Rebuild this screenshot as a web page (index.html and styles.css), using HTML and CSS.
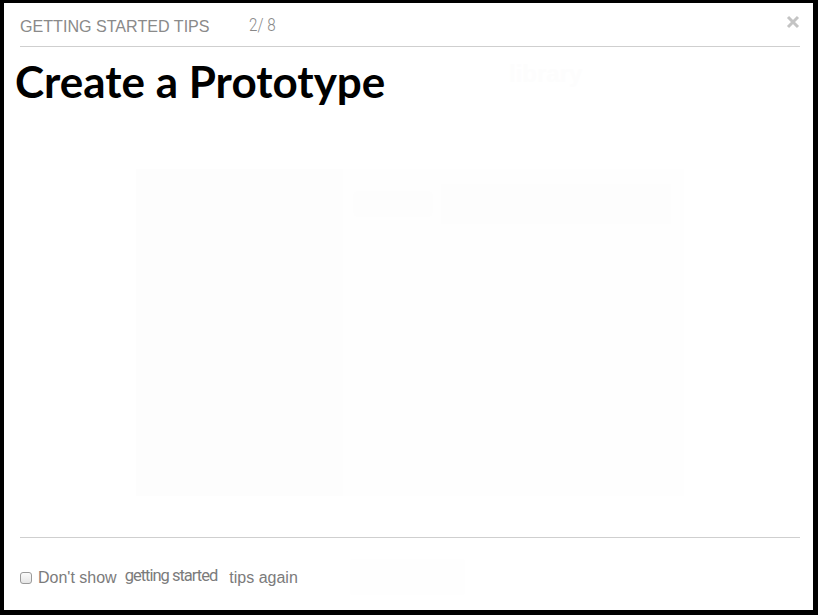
FILE: index.html
```html
<!DOCTYPE html>
<html>
<head>
<meta charset="utf-8">
<link rel="stylesheet" href="styles.css">
</head>
<body>
<div class="panel">
  <div class="header">
    <span class="kicker">GETTING STARTED TIPS</span>
    <span class="count">2/ 8</span>
    <svg class="close" width="14" height="14" viewBox="0 0 14 14"><path d="M2 2 L12 12 M12 2 L2 12" stroke="#c4c4c4" stroke-width="3" stroke-linecap="butt"/></svg>
  </div>
  <h1 class="title">Create a Prototype</h1>
  <div class="ghost-label">library</div>
  <div class="stage">
    <div class="ghost-side"></div>
    <div class="ghost-main">
      <div class="ghost-bar"><span class="ghost-pill"></span><span class="ghost-box"></span></div>
      <div class="ghost-grid"></div>
    </div>
  </div>
  <div class="footer">
    <label class="dontshow"><input type="checkbox" class="check"><span>Don't show</span><span class="raised">getting started</span><span>tips again</span></label>
    <span class="ghost-btn"></span>
  </div>
</div>
</body>
</html>
```
FILE: styles.css
```css
html, body { margin: 0; padding: 0; }
body { background: #000; width: 818px; height: 615px; overflow: hidden; }
.panel {
  margin: 3px 5px 0 4px;
  width: 809px;
  height: 607px;
  background: #fff;
  display: flex;
  flex-direction: column;
  position: relative;
}
.header {
  margin: 0 13px 0 16px;
  height: 44px;
  border-bottom: 1px solid #cfcfcf;
  display: flex;
  align-items: center;
  font-family: "Liberation Sans", Arial, sans-serif;
  box-sizing: border-box;
  position: relative;
}
.kicker { font-size: 16.1px; color: #8a8a8a; margin-top: 3px; }
.count { font-family: Roboto, sans-serif; font-weight: 300; font-size: 19px; color: #888; margin-left: 39px; margin-top: 0; transform: scaleX(0.8); transform-origin: left center; }
.close { position: absolute; right: 0; top: 12px; }
.title {
  margin: 6px 0 0 11px;
  font-family: Lato, sans-serif;
  font-weight: 700;
  font-size: 44px;
  line-height: 56px;
  color: #000;
}
.ghost-label { position: absolute; left: 505px; top: 57px; font-family: "Liberation Sans", sans-serif; font-weight: bold; font-size: 24px; color: #fdfdfd; }
.stage { flex: 1; display: flex; padding: 60px 0 0 132px; }
.ghost-side { width: 207px; height: 327px; background: #fdfdfd; }
.ghost-main { width: 341px; height: 327px; background: #fefefe; padding: 0 0 0 10px; box-sizing: border-box; }
.ghost-bar { display: flex; gap: 8px; margin-top: 15px; height: 40px; align-items: center; }
.ghost-pill { width: 80px; height: 26px; border-radius: 6px; background: #fdfdfd; }
.ghost-box { width: 230px; height: 40px; background: #fdfdfd; }
.ghost-grid { margin-top: 20px; height: 250px; background: #fefefe; }
.footer {
  margin: 0 13px 0 16px;
  height: 73px;
  border-top: 1px solid #cfcfcf;
  display: flex;
  align-items: center;
  padding-top: 6px;
  box-sizing: border-box;
}
.dontshow { display: flex; align-items: baseline; font-family: "Liberation Sans", Arial, sans-serif; font-size: 16px; color: #7b7b7b; }
.check {
  -webkit-appearance: none;
  appearance: none;
  width: 12px; height: 12px;
  margin: 0 6px 0 0;
  border: 1px solid #9a9a9a;
  border-radius: 3px;
  background: linear-gradient(#fbfbfb, #e6e6e6);
  position: relative; top: 1px;
  box-sizing: border-box;
}
.raised { margin: 0 12px 0 8px; position: relative; top: -2px; font-family: Roboto, sans-serif; font-size: 16.5px; letter-spacing: -1px; white-space: nowrap; }
.ghost-btn { margin-left: 52px; width: 115px; height: 36px; background: #fefefe; border-radius: 3px; }
```
